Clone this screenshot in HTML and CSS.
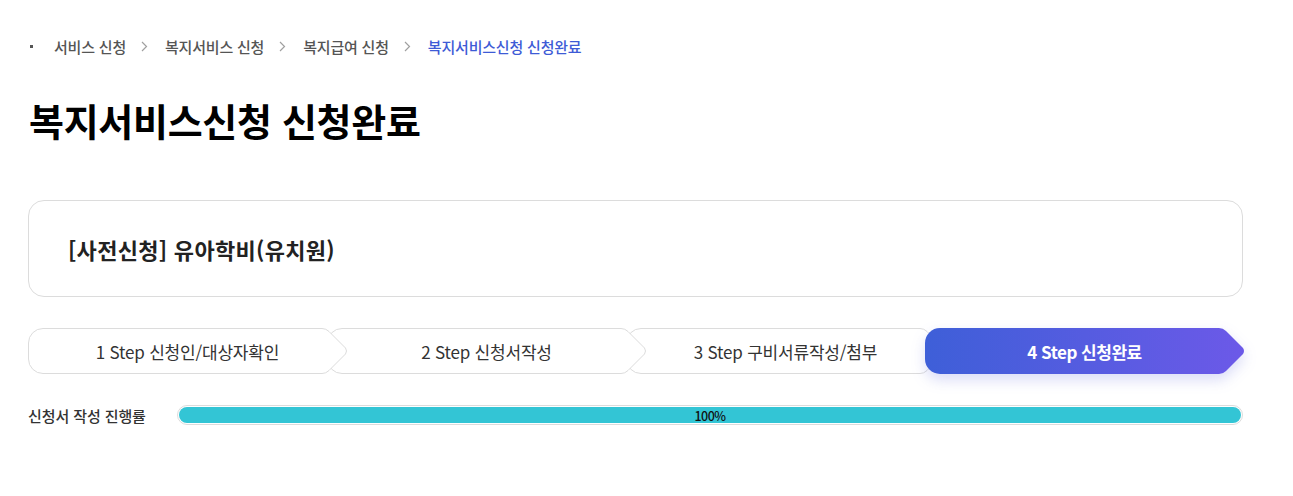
FILE: index.html
```html
<!DOCTYPE html>
<html lang="ko">
<head>
<meta charset="utf-8">
<title>복지서비스신청 신청완료</title>
<link rel="stylesheet" href="styles.css">
</head>
<body>
<div class="page">
  <nav class="breadcrumb">
    <span class="bc-dot"></span>
    <span class="bc-item">서비스 신청</span>
    <svg class="bc-sep" width="7" height="11" viewBox="0 0 7 11"><path d="M1,1 L5.5,5.5 L1,10" fill="none" stroke="#a0a0a0" stroke-width="1.2"/></svg>
    <span class="bc-item">복지서비스 신청</span>
    <svg class="bc-sep" width="7" height="11" viewBox="0 0 7 11"><path d="M1,1 L5.5,5.5 L1,10" fill="none" stroke="#a0a0a0" stroke-width="1.2"/></svg>
    <span class="bc-item">복지급여 신청</span>
    <svg class="bc-sep" width="7" height="11" viewBox="0 0 7 11"><path d="M1,1 L5.5,5.5 L1,10" fill="none" stroke="#a0a0a0" stroke-width="1.2"/></svg>
    <span class="bc-item current">복지서비스신청 신청완료</span>
  </nav>

  <h1 class="title">복지서비스신청 신청완료</h1>

  <div class="card">
    <h2 class="card-title">[사전신청] 유아학비(유치원)</h2>
  </div>

  <ol class="steps">
    <li class="step s1">
      <svg class="step-bg" width="319" height="46" viewBox="0 0 319 46"><path d="M15,0.5 H294 Q298,0.5 301,3.5 L317.5,20 Q319.5,23 317.5,26 L301,42.5 Q298,45.5 294,45.5 H15 A14.5,14.5 0 0 1 0.5,31 V15 A14.5,14.5 0 0 1 15,0.5 Z" fill="#fff" stroke="#dcdcdc"/></svg>
      <span class="step-label">1 Step 신청인/대상자확인</span>
    </li>
    <li class="step s2">
      <svg class="step-bg" width="319" height="46" viewBox="0 0 319 46"><path d="M15,0.5 H294 Q298,0.5 301,3.5 L317.5,20 Q319.5,23 317.5,26 L301,42.5 Q298,45.5 294,45.5 H15 A14.5,14.5 0 0 1 0.5,31 V15 A14.5,14.5 0 0 1 15,0.5 Z" fill="#fff" stroke="#dcdcdc"/></svg>
      <span class="step-label">2 Step 신청서작성</span>
    </li>
    <li class="step s3">
      <svg class="step-bg" width="319" height="46" viewBox="0 0 319 46"><path d="M15,0.5 H294 Q298,0.5 301,3.5 L317.5,20 Q319.5,23 317.5,26 L301,42.5 Q298,45.5 294,45.5 H15 A14.5,14.5 0 0 1 0.5,31 V15 A14.5,14.5 0 0 1 15,0.5 Z" fill="#fff" stroke="#dcdcdc"/></svg>
      <span class="step-label">3 Step 구비서류작성/첨부</span>
    </li>
    <li class="step s4 active">
      <svg class="step-bg" width="319" height="46" viewBox="0 0 319 46"><defs><linearGradient id="g4" x1="0" y1="0" x2="1" y2="0"><stop offset="0" stop-color="#3e5fd8"/><stop offset="1" stop-color="#6c59e8"/></linearGradient></defs><path d="M15,0 H294 Q298,0 301,3 L318,20 Q320,23 318,26 L301,43 Q298,46 294,46 H15 A15,15 0 0 1 0,31 V15 A15,15 0 0 1 15,0 Z" fill="url(#g4)"/></svg>
      <span class="step-label">4 Step 신청완료</span>
    </li>
  </ol>

  <div class="progress-row">
    <span class="progress-label">신청서 작성 진행률</span>
    <div class="progress">
      <div class="progress-fill" style="width:100%"></div>
      <span class="progress-text">100%</span>
    </div>
  </div>
</div>
</body>
</html>
```

FILE: styles.css
```css
* { box-sizing: border-box; }
html, body { margin: 0; padding: 0; background: #fff; }
body {
  font-family: "Noto Sans CJK KR", "Noto Sans", sans-serif;
  color: #222;
}
.page {
  padding: 35px 50px 0 28px;
  width: 1293px;
}
.breadcrumb {
  display: flex;
  align-items: center;
  height: 22px;
  font-size: 15px;
  font-weight: 500;
  color: #555;
  letter-spacing: -0.2px;
}
.bc-dot {
  width: 3px;
  height: 3px;
  background: #555;
  margin: 0 21px 0 2px;
}
.bc-sep {
  display: block;
  margin: 0 17px 0 15px;
}
.bc-item.current { color: #3e5bd6; }

.title {
  margin: 40px 0 0 1px;
  font-size: 38px;
  line-height: 46px;
  font-weight: 700;
  color: #000;
  letter-spacing: -0.3px;
}

.card {
  margin-top: 57px;
  height: 97px;
  border: 1px solid #dcdcdc;
  border-radius: 16px;
  display: flex;
  align-items: center;
  padding: 0 39px;
}
.card-title {
  margin: 0;
  font-size: 22px;
  font-weight: 700;
  color: #222;
  letter-spacing: 0.3px;
}

.steps {
  list-style: none;
  margin: 31px 0 0;
  padding: 0;
  display: flex;
  height: 46px;
}
.step {
  position: relative;
  width: 319px;
  height: 46px;
  flex: none;
  display: flex;
  align-items: center;
  justify-content: center;
}
.step + .step { margin-left: -20px; }
.s1 { z-index: 4; }
.s2 { z-index: 3; }
.s3 { z-index: 2; }
.s4 { z-index: 5; }
.step-bg {
  position: absolute;
  left: 0;
  top: 0;
  display: block;
}
.s4 .step-bg { filter: drop-shadow(0 6px 7px rgba(85, 95, 220, 0.22)); }
.step-label {
  position: relative;
  font-size: 17px;
  color: #333;
  letter-spacing: -0.2px;
}
.active .step-label {
  color: #fff;
  font-weight: 700;
  letter-spacing: -0.5px;
}

.progress-row {
  margin-top: 31px;
  display: flex;
  align-items: center;
  height: 20px;
}
.progress-label {
  width: 149px;
  font-size: 15px;
  font-weight: 500;
  color: #333;
  letter-spacing: -0.1px;
}
.progress {
  position: relative;
  flex: 1;
  height: 20px;
  border: 1px solid #dcdcdc;
  border-radius: 10px;
  padding: 1px;
  background: #fff;
}
.progress-fill {
  height: 100%;
  background: #33c5d5;
  border-radius: 9px;
}
.progress-text {
  position: absolute;
  left: 0;
  right: 0;
  top: 0;
  bottom: 0;
  display: flex;
  align-items: center;
  justify-content: center;
  font-size: 12.5px;
  font-weight: 500;
  color: #111;
  letter-spacing: -0.5px;
}
```
